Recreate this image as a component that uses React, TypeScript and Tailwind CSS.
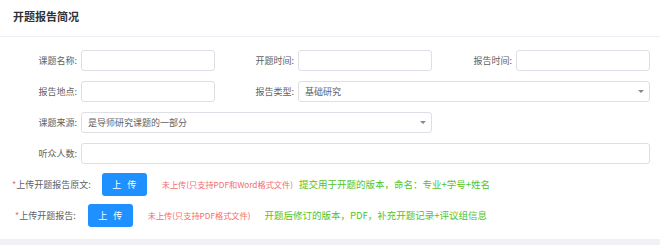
import React from "react";

const font = { fontFamily: '"Noto Sans CJK SC", "Noto Sans", sans-serif' };

function Label({ text, className = "" }: { text: string; className?: string }) {
  return (
    <div className={`shrink-0 pr-[4px] text-right text-[9px] text-[#606266] ${className}`}>
      {text}
    </div>
  );
}

function Input({ className = "" }: { className?: string }) {
  return <div className={`h-[21px] shrink-0 rounded-[3px] border border-[#dcdfe6] bg-white ${className}`} />;
}

function Select({ value, className = "" }: { value: string; className?: string }) {
  return (
    <div
      className={`flex h-[21px] shrink-0 items-center justify-between rounded-[3px] border border-[#dcdfe6] bg-white pl-[6px] pr-[5px] text-[9px] text-[#606266] ${className}`}
    >
      <span>{value}</span>
      <span className="h-0 w-0 border-x-[3px] border-t-[3px] border-x-transparent border-t-[#8a8a8a]" />
    </div>
  );
}

function UploadButton() {
  return (
    <div className="flex h-[23px] w-[45px] shrink-0 items-center justify-center rounded-[3px] bg-[#1e90ff] text-[9px] tracking-[6px] text-white">
      <span className="pl-[6px]">上传</span>
    </div>
  );
}

export default function App() {
  return (
    <div className="h-[245px] w-[660px] bg-[#f0f2f5]" style={font}>
      <div className="h-[239px] bg-white">
        {/* header */}
        <div className="h-[37px] border-b border-[#ebeef5] px-[13px] pt-[8px] text-[11px] font-bold leading-[16px] text-[#303133]">
          开题报告简况
        </div>

        {/* form */}
        <div className="flex flex-col gap-[10px] pt-[13px]">
          <div className="flex items-center">
            <Label text="课题名称:" className="w-[81px]" />
            <Input className="w-[134px]" />
            <Label text="开题时间:" className="w-[83px]" />
            <Input className="w-[134px]" />
            <Label text="报告时间:" className="w-[84px]" />
            <Input className="w-[134px]" />
          </div>
          <div className="flex items-center">
            <Label text="报告地点:" className="w-[81px]" />
            <Input className="w-[134px]" />
            <Label text="报告类型:" className="w-[83px]" />
            <Select value="基础研究" className="w-[352px]" />
          </div>
          <div className="flex items-center">
            <Label text="课题来源:" className="w-[81px]" />
            <Select value="是导师研究课题的一部分" className="w-[351px]" />
          </div>
          <div className="flex items-center">
            <Label text="听众人数:" className="w-[81px]" />
            <Input className="w-[569px]" />
          </div>
        </div>

        {/* uploads */}
        <div className="flex flex-col gap-[8px] pt-[9px] text-[9px]">
          <div className="flex items-center pl-[12px]">
            <span className="text-[#f56c6c]">*</span>
            <span className="text-[#606266]">上传开题报告原文:</span>
            <div className="ml-[11px]">
              <UploadButton />
            </div>
            <span className="ml-[15px] text-[8.2px] text-[#f56c6c]">未上传(只支持PDF和Word格式文件)</span>
            <span className="ml-[6px] text-[9.5px] text-[#52c41a]">提交用于开题的版本，命名：专业+学号+姓名</span>
          </div>
          <div className="flex items-center pl-[15px]">
            <span className="text-[#f56c6c]">*</span>
            <span className="text-[#606266]">上传开题报告:</span>
            <div className="ml-[12px]">
              <UploadButton />
            </div>
            <span className="ml-[15px] text-[8.2px] text-[#f56c6c]">未上传(只支持PDF格式文件)</span>
            <span className="ml-[14px] text-[9.5px] text-[#52c41a]">开题后修订的版本，PDF，补充开题记录+评议组信息</span>
          </div>
        </div>
      </div>
    </div>
  );
}
